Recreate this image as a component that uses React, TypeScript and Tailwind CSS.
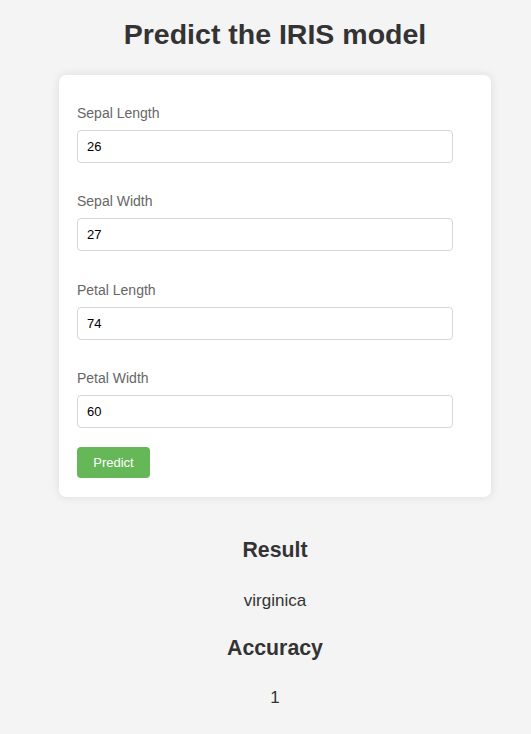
import React from "react";

const fields = [
  { label: "Sepal Length", value: "26" },
  { label: "Sepal Width", value: "27" },
  { label: "Petal Length", value: "74" },
  { label: "Petal Width", value: "60" },
];

export default function App() {
  return (
    <div
      className="min-h-[734px] w-full bg-[#f4f4f4] pl-[19px] flex flex-col items-center text-[#333]"
      style={{ fontFamily: '"Liberation Sans", Arial, sans-serif' }}
    >
      <h1 className="mt-[17px] text-[28.5px] leading-[34px] font-bold text-[#333]">Predict the IRIS model</h1>
      <div className="mt-[24px] w-[432px] bg-white rounded-[7px] shadow-[0_0_10px_rgba(0,0,0,0.1)] pt-[28px] pb-[19px] px-[18px]">
        {fields.map((f, i) => (
          <div key={f.label} className={i > 0 ? "mt-[28.4px]" : ""}>
            <div className="text-[14px] leading-[20px] text-[#666]">{f.label}</div>
            <input
              readOnly
              value={f.value}
              className="mt-[7px] block w-[376px] h-[33px] border border-[#d6d6d6] rounded-[4px] pl-[9px] text-[13px] text-black bg-white outline-none"
              style={{ fontFamily: '"Liberation Sans", Arial, sans-serif' }}
            />
          </div>
        ))}
        <button className="mt-[19px] w-[73px] h-[31px] bg-[#66b758] text-white text-[13px] rounded-[4px]">
          Predict
        </button>
      </div>
      <h2 className="mt-[39px] text-[21.3px] leading-[28px] font-bold">Result</h2>
      <div className="mt-[25px] text-[17px] leading-[24px]">virginica</div>
      <h2 className="mt-[21px] text-[21.3px] leading-[28px] font-bold">Accuracy</h2>
      <div className="mt-[24px] text-[17px] leading-[24px]">1</div>
    </div>
  );
}
